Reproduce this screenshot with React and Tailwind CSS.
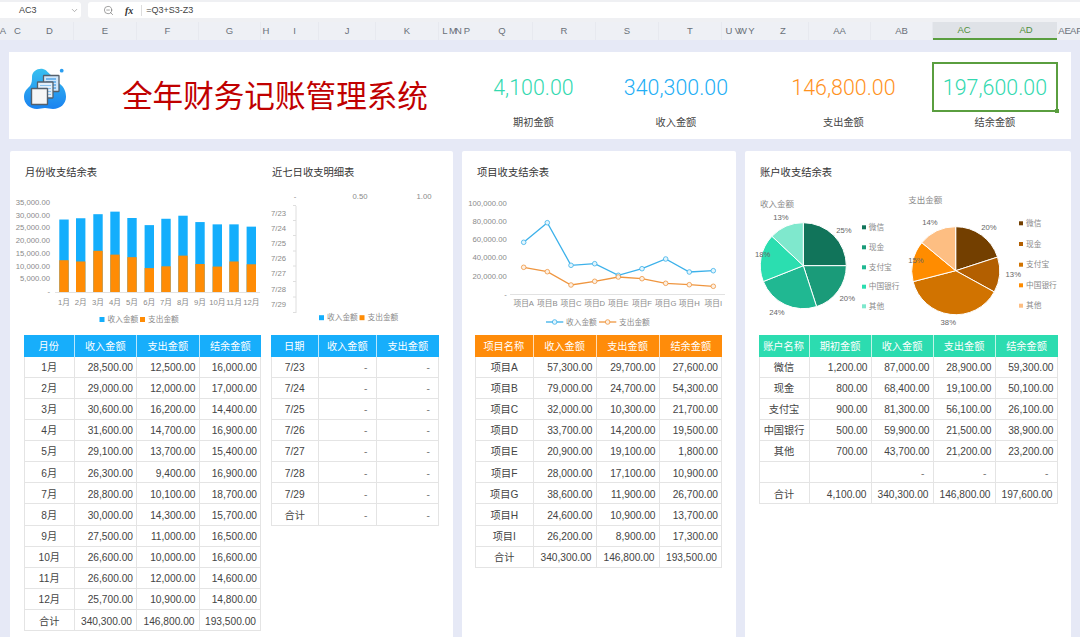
import React from "react";
import { ChevronDown, ZoomOut } from "lucide-react";

const COLS = [["A",6],["",3],["C",17],["D",48],["E",63],["F",62],["G",62],["H",10],["I",48],["J",57],["K",63],["L",12],["M",4],["N",7],["P",10],["Q",61],["R",63],["S",63],["T",63],["U",14],["V",4],["W",5],["Y",13],["Z",51],["AA",62],["AB",62],["AC",62,1],["AD",62,1],["AE",15],["AF",8]];

const money = (n) => n.toLocaleString("en-US", { minimumFractionDigits: 2, maximumFractionDigits: 2 });

const MONTHS = [["1月",28500,12500,16000],["2月",29000,12000,17000],["3月",30600,16200,14400],["4月",31600,14700,16900],["5月",29100,13700,15400],["6月",26300,9400,16900],["7月",28800,10100,18700],["8月",30000,14300,15700],["9月",27500,11000,16500],["10月",26600,10000,16600],["11月",26600,12000,14600],["12月",25700,10900,14800],["合计",340300,146800,193500]];
const DAYS = [["7/23"],["7/24"],["7/25"],["7/26"],["7/27"],["7/28"],["7/29"],["合计"]].map((r) => [r[0], "-", "-"]);
const PROJECTS = [["项目A",57300,29700,27600],["项目B",79000,24700,54300],["项目C",32000,10300,21700],["项目D",33700,14200,19500],["项目E",20900,19100,1800],["项目F",28000,17100,10900],["项目G",38600,11900,26700],["项目H",24600,10900,13700],["项目I",26200,8900,17300],["合计",340300,146800,193500]];
const ACCOUNTS = [["微信",1200,87000,28900,59300],["现金",800,68400,19100,50100],["支付宝",900,81300,56100,26100],["中国银行",500,59900,21500,38900],["其他",700,43700,21200,23200],["","","-","-","-"],["合计",4100,340300,146800,197600]];

function DataTable({ grid, headerBg, head, rows, className = "" }) {
  return (
    <div className={"flex flex-col text-[10.2px] text-[#444] " + className}>
      <div className={"grid h-[21.5px] text-white " + grid + " " + headerBg}>
        {head.map((h) => (
          <div key={h} className="flex items-center justify-center pt-[2px] border-r border-white/70 last:border-r-0 whitespace-nowrap">{h}</div>
        ))}
      </div>
      {rows.map((row, i) => {
        const total = row[0] === "合计";
        return (
          <div key={i} className={"grid h-[21.15px] border-b border-[#e4e4e4] " + grid}>
            {row.map((c, j) =>
              j === 0 ? (
                <div key={j} className="flex items-center justify-center pt-[2px] border-l border-r border-[#e4e4e4] whitespace-nowrap">{c}</div>
              ) : (
                <div key={j} className={"flex items-center justify-end pt-[2px] border-r border-[#e4e4e4] whitespace-nowrap " + (c === "-" ? "pr-[8px] text-[#777]" : total ? "pr-[4px]" : "pr-[3px]")}>
                  {typeof c === "number" ? money(c) : c}
                </div>
              )
            )}
          </div>
        );
      })}
    </div>
  );
}

function Title({ children, className = "" }) {
  return <div className={"h-[14px] flex items-center text-[10.3px] text-[#333] whitespace-nowrap " + className}>{children}</div>;
}

function Stat({ value, label, color, width, selected }) {
  return (
    <div className={"flex flex-col items-center " + width}>
      <div className={"relative flex items-center justify-center h-[50px] pt-[2px] font-['Roboto',sans-serif] text-[21.4px] font-light " + color + (selected ? " w-[126px] border-2 border-[#5a9e3f]" : "")}>
        {value}
        {selected && <span className="absolute -right-[3px] -bottom-[3px] w-[4px] h-[4px] bg-[#5a9e3f]" />}
      </div>
      <div className="h-[18px] mt-[1px] pt-[1px] flex items-center text-[10.2px] text-[#444]">{label}</div>
    </div>
  );
}

function Logo() {
  return (
    <svg width="44" height="44" viewBox="0 0 44 44" className="shrink-0">
      <defs>
        <linearGradient id="lg" x1="0" y1="0" x2="0" y2="1">
          <stop offset="0" stopColor="#38c0f0" />
          <stop offset="1" stopColor="#1a82f0" />
        </linearGradient>
      </defs>
      <path d="M8 9C8 3 14 0 19 1c4 1 5 4 8 6 3 3 5 6 9 9 4 3 6 8 6 13 0 7-6 12-13 12-3 0-5-1-8-1s-5 1-8 1C6 41 0 36 0 29c0-6 3-8 6-11 2-3 2-6 2-9z" fill="url(#lg)" />
      <circle cx="37.7" cy="2.7" r="1.9" fill="#2a9df0" />
      <rect x="19.5" y="7.5" width="15.5" height="16" rx="0.5" fill="#cfe6fa" stroke="#55606c" strokeWidth="1.3" />
      <path d="M22 11h10M22 14h10M22 17h10M22 20h10" stroke="#56a8ea" strokeWidth="1.3" />
      <rect x="13.5" y="14" width="15.5" height="16" rx="0.5" fill="#e3effa" stroke="#55606c" strokeWidth="1.3" />
      <path d="M16 17.5h11M16 20.5h11M16 23.5h11M16 26.5h11" stroke="#8cc4f0" strokeWidth="1.2" />
      <rect x="7.5" y="20.5" width="16" height="16" rx="0.5" fill="#f6f6f6" stroke="#55606c" strokeWidth="1.4" />
    </svg>
  );
}

const AXIS = "#8a8a8a";

function Legend({ y, items }) {
  return items.map(([lx, color, text]) => (
    <g key={text + lx}>
      <rect x={lx} y={y - 2.5} width="5" height="5" fill={color} />
      <text x={lx + 8} y={y + 2.7} fontSize="7.7" fill={AXIS}>{text}</text>
    </g>
  ));
}

function Charts1() {
  const bx = [64, 80.7, 98, 115, 132, 149.3, 166, 183, 200, 217.3, 234, 251.3];
  const scale = 89 / 35000;
  const days = [213, 228, 243, 258.5, 273.5, 289, 304.5];
  return (
    <svg width="443" height="150" viewBox="10 185 443 150" className="block">
      {["-", "5,000.00", "10,000.00", "15,000.00", "20,000.00", "25,000.00", "30,000.00", "35,000.00"].map((t, i) => (
        <text key={t} x="50" y={291.3 - i * 12.72 + 2.7} fontSize="7.7" fill={AXIS} textAnchor="end">{t}</text>
      ))}
      <line x1="55" y1="292.5" x2="260" y2="292.5" stroke="#e2e2e2" />
      {MONTHS.slice(0, 12).map((m, i) => (
        <g key={m[0]}>
          <rect x={bx[i] - 4.7} y={292 - m[1] * scale} width="9.4" height={m[1] * scale} fill="#14aefc" />
          <rect x={bx[i] - 4.7} y={292 - m[2] * scale} width="9.4" height={m[2] * scale} fill="#ff8c05" />
          <text x={bx[i]} y="304.5" fontSize="7.7" fill={AXIS} textAnchor="middle">{m[0]}</text>
        </g>
      ))}
      <Legend y={319.5} items={[[99.5, "#14aefc", "收入金额"], [140, "#ff8c05", "支出金额"]]} />
      {[["-", 295], ["0.50", 360], ["1.00", 424]].map(([t, x]) => (
        <text key={t} x={x} y="198.5" fontSize="7.7" fill={AXIS} textAnchor="middle">{t}</text>
      ))}
      <line x1="296" y1="206" x2="296" y2="313" stroke="#dedede" />
      {days.map((y, i) => (
        <g key={y}>
          <text x="286" y={y + 2.7} fontSize="7.7" fill={AXIS} textAnchor="end">{DAYS[i][0]}</text>
          <line x1="293" y1={y - 7.5} x2="296" y2={y - 7.5} stroke="#dedede" />
        </g>
      ))}
      <line x1="293" y1="312.5" x2="296" y2="312.5" stroke="#dedede" />
      <Legend y={317.7} items={[[319, "#14aefc", "收入金额"], [359.5, "#ff8c05", "支出金额"]]} />
    </svg>
  );
}

function Charts2() {
  const xs = [523.7, 547.3, 571, 594.7, 618.3, 642, 665.7, 689.3, 713.3];
  const inc = [242.3, 222.7, 265.3, 263.7, 275.3, 268.7, 259, 272, 270.7];
  const exp = [267.3, 271.7, 285, 281.3, 277, 278.7, 283.3, 284.7, 286.3];
  const series = [[inc, "#3cb1ea", "#e3f5fd"], [exp, "#ef9640", "#fdf0e3"]];
  return (
    <svg width="274" height="150" viewBox="462 185 274 150" className="block">
      {["-", "20,000.00", "40,000.00", "60,000.00", "80,000.00", "100,000.00"].map((t, i) => (
        <text key={t} x="506.7" y={[294, 276, 257.3, 239.3, 221.7, 203][i] + 2.7} fontSize="7.7" fill={AXIS} textAnchor="end">{t}</text>
      ))}
      <line x1="510" y1="294.5" x2="725" y2="294.5" stroke="#e2e2e2" />
      {PROJECTS.slice(0, 9).map((p, i) => (
        <text key={p[0]} x={xs[i]} y="306" fontSize="7.7" fill={AXIS} textAnchor="middle">{p[0]}</text>
      ))}
      {series.map(([ys, c, fill]) => (
        <g key={c}>
          <polyline points={xs.map((x, i) => x + "," + ys[i]).join(" ")} fill="none" stroke={c} strokeWidth="1.3" />
          {xs.map((x, i) => (
            <circle key={x} cx={x} cy={ys[i]} r="2.3" fill={fill} stroke={c} strokeWidth="0.8" />
          ))}
        </g>
      ))}
      {[[546, 563.3, 566, "收入金额", "#3cb1ea", "#e3f5fd"], [599, 616.3, 619, "支出金额", "#ef9640", "#fdf0e3"]].map(([x1, x2, tx, t, c, f]) => (
        <g key={t}>
          <line x1={x1} y1="322" x2={x2} y2="322" stroke={c} strokeWidth="1.3" />
          <circle cx={(x1 + x2) / 2} cy="322" r="2.3" fill={f} stroke={c} strokeWidth="0.8" />
          <text x={tx} y="324.7" fontSize="7.7" fill={AXIS}>{t}</text>
        </g>
      ))}
    </svg>
  );
}

function Pie({ cx, cy, r, values, colors }) {
  const total = values.reduce((a, b) => a + b, 0);
  let acc = 0;
  return values.map((v, i) => {
    const a0 = (acc / total) * 2 * Math.PI;
    acc += v;
    const a1 = (acc / total) * 2 * Math.PI;
    const p = (a) => (cx + r * Math.sin(a)).toFixed(2) + " " + (cy - r * Math.cos(a)).toFixed(2);
    return <path key={i} d={`M${cx} ${cy}L${p(a0)}A${r} ${r} 0 ${a1 - a0 > Math.PI ? 1 : 0} 1 ${p(a1)}Z`} fill={colors[i]} stroke="#fff" strokeWidth="1" />;
  });
}

function Charts3() {
  const names = ["微信", "现金", "支付宝", "中国银行", "其他"];
  const c1 = ["#11745a", "#1a9b79", "#20b892", "#2bdeb0", "#7fe8cd"];
  const c2 = ["#733f00", "#b35f00", "#d17300", "#ff8c00", "#fdbe82"];
  const ly1 = [227.3, 247.3, 267.3, 286.7, 306.3];
  const ly2 = [223.3, 244, 264.7, 285.3, 305.7];
  const labels = [["13%", 781, 217.7], ["25%", 844, 230], ["20%", 847.3, 298], ["24%", 777, 312], ["18%", 762.7, 254.7], ["14%", 930, 222.3], ["20%", 989, 227.3], ["13%", 1013.3, 274.7], ["38%", 948.3, 322.3], ["15%", 916, 260]];
  return (
    <svg width="326" height="150" viewBox="745 185 326 150" className="block">
      <text x="760" y="207" fontSize="8.5" fill={AXIS}>收入金额</text>
      <text x="908.3" y="203" fontSize="8.5" fill={AXIS}>支出金额</text>
      <Pie cx={803.3} cy={265.7} r={43} values={[25, 20, 24, 18, 13]} colors={c1} />
      <Pie cx={955.7} cy={270.7} r={44} values={[20, 13, 38, 15, 14]} colors={c2} />
      {labels.map(([t, x, y]) => (
        <text key={x} x={x} y={y + 2.7} fontSize="7.7" fill="#666" textAnchor="middle">{t}</text>
      ))}
      {names.map((n, i) => (
        <g key={n}>
          <rect x="862" y={ly1[i] - 2} width="4" height="4" fill={c1[i]} />
          <text x="868.7" y={ly1[i] + 2.7} fontSize="7.7" fill={AXIS}>{n}</text>
          <rect x="1019" y={ly2[i] - 2} width="4" height="4" fill={c2[i]} />
          <text x="1026" y={ly2[i] + 2.7} fontSize="7.7" fill={AXIS}>{n}</text>
        </g>
      ))}
    </svg>
  );
}

export default function App() {
  return (
    <div className="w-[1080px] h-[637px] overflow-hidden bg-[#e6e9f6] flex flex-col font-['Liberation_Sans','Noto_Sans_CJK_SC',sans-serif]">
      <div className="h-[22px] shrink-0 flex items-start gap-[7px] bg-[#eff0f3] pt-[2px]">
        <div className="w-[81px] h-[16px] bg-white rounded-r-[3px] flex items-center pl-[19px] pr-[2px] pt-[1px] justify-between text-[9px] text-[#444]">
          <span>AC3</span>
          <ChevronDown size={9} className="text-[#999]" />
        </div>
        <div className="flex-1 h-[16px] bg-white rounded-l-[3px] flex items-center pl-[15px] pt-[1px] text-[9px] text-[#444]">
          <ZoomOut size={11} strokeWidth={1.3} className="text-[#666]" />
          <span className="ml-[11px] font-['Liberation_Serif',serif] italic font-bold text-[10px] text-[#333]">fx</span>
          <span className="ml-[8px] mr-[4px] w-px h-[11px] bg-[#ddd]" />
          <span>=Q3+S3-Z3</span>
        </div>
      </div>
      <div className="h-[18px] shrink-0 flex bg-[#eef0f5] text-[9.5px] text-[#6a7079]">
        {COLS.map(([label, w, sel], i) => (
          <div
            key={i}
            style={{ width: w }}
            className={"flex items-center justify-center whitespace-nowrap " + (sel ? "bg-[#dfe2e7] border-b-2 border-[#5a9e3f] text-[#4f8f3a]" : w >= 48 ? "border-r border-[#e7e9ef]" : "")}
          >
            {label}
          </div>
        ))}
      </div>
      <div className="ml-[9px] mt-[12px] w-[1062px] h-[87px] shrink-0 bg-white flex pt-[10px]">
        <div className="ml-[15px] mt-[6px] h-[44px]"><Logo /></div>
        <div className="ml-[54px] h-[50px] mt-[10px] flex items-center text-[30.6px] text-[#c00000] whitespace-nowrap">全年财务记账管理系统</div>
        <div className="ml-[42px] flex">
          <Stat width="w-[127px]" value="4,100.00" label="期初金额" color="text-[#33d9b0]" />
          <Stat width="w-[158px]" value="340,300.00" label="收入金额" color="text-[#22aef5]" />
          <Stat width="w-[177px]" value="146,800.00" label="支出金额" color="text-[#ff921e]" />
          <Stat width="w-[126px]" value="197,600.00" label="结余金额" color="text-[#33d9b0]" selected />
        </div>
      </div>
      <div className="ml-[10px] mt-[12px] flex gap-[9px] flex-1 min-h-0">
        <div className="w-[443px] bg-white rounded-t-[2px] pt-[15px]">
          <div className="flex">
            <Title className="ml-[15px] w-[247px]">月份收支结余表</Title>
            <Title>近七日收支明细表</Title>
          </div>
          <div className="mt-[5px]"><Charts1 /></div>
          <div className="ml-[14px] flex gap-[9.5px] items-start">
            <DataTable grid="grid-cols-[50.5px_62.5px_62.5px_61.5px] w-[237px]" headerBg="bg-[#17aefb]" head={["月份", "收入金额", "支出金额", "结余金额"]} rows={MONTHS} />
            <DataTable grid="grid-cols-[48.5px_57.5px_62.5px] w-[168.5px]" headerBg="bg-[#17aefb]" head={["日期", "收入金额", "支出金额"]} rows={DAYS} />
          </div>
        </div>
        <div className="w-[274px] bg-white rounded-t-[2px] pt-[15px]">
          <Title className="ml-[15px]">项目收支结余表</Title>
          <div className="mt-[5px]"><Charts2 /></div>
          <DataTable className="ml-[13px]" grid="grid-cols-[58.5px_63px_63px_62.5px] w-[247px]" headerBg="bg-[#ff8c0a]" head={["项目名称", "收入金额", "支出金额", "结余金额"]} rows={PROJECTS} />
        </div>
        <div className="w-[326px] bg-white rounded-t-[2px] pt-[15px]">
          <Title className="ml-[15px]">账户收支结余表</Title>
          <div className="mt-[5px]"><Charts3 /></div>
          <DataTable className="ml-[13.5px]" grid="grid-cols-[51px_62px_62px_62px_62px] w-[299px]" headerBg="bg-[#2cdcb0]" head={["账户名称", "期初金额", "收入金额", "支出金额", "结余金额"]} rows={ACCOUNTS} />
        </div>
      </div>
    </div>
  );
}
